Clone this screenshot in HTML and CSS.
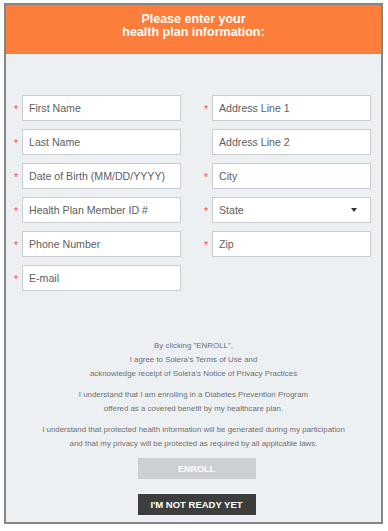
FILE: index.html
```
<!DOCTYPE html>
<html lang="en">

<head>
    <meta charset="UTF-8">
    <meta name="viewport" content="width=device-width, initial-scale=1.0">
    <title>Health Plan Information</title>
    <link rel="stylesheet" href="styles.css">
</head>

<body>
    <div class="frame">
        <div class="header">
            <h1>Please enter your<br>health plan information:</h1>
        </div>
        <div class="form-body">
            <div class="fields">
                <div class="column">
                    <div class="field"><span class="req">*</span><input type="text" placeholder="First Name"></div>
                    <div class="field"><span class="req">*</span><input type="text" placeholder="Last Name"></div>
                    <div class="field"><span class="req">*</span><input type="text" placeholder="Date of Birth (MM/DD/YYYY)"></div>
                    <div class="field"><span class="req">*</span><input type="text" placeholder="Health Plan Member ID #"></div>
                    <div class="field"><span class="req">*</span><input type="text" placeholder="Phone Number"></div>
                    <div class="field"><span class="req">*</span><input type="text" placeholder="E-mail"></div>
                </div>
                <div class="column">
                    <div class="field"><span class="req">*</span><input type="text" placeholder="Address Line 1"></div>
                    <div class="field"><span class="req"></span><input type="text" placeholder="Address Line 2"></div>
                    <div class="field"><span class="req">*</span><input type="text" placeholder="City"></div>
                    <div class="field"><span class="req">*</span>
                        <div class="select-wrap">
                            <select>
                                <option>State</option>
                            </select>
                        </div>
                    </div>
                    <div class="field"><span class="req">*</span><input type="text" placeholder="Zip"></div>
                </div>
            </div>

            <div class="legal">
                <p>By clicking "ENROLL",<br>I agree to Solera's Terms of Use and<br>acknowledge receipt of Solera's Notice of Privacy Practices</p>
                <p>I understand that I am enrolling in a Diabetes Prevention Program<br>offered as a covered benefit by my healthcare plan.</p>
                <p>I understand that protected health information will be generated during my participation<br>and that my privacy will be protected as required by all applicable laws.</p>
            </div>

            <div class="actions">
                <button class="enroll" disabled>ENROLL</button>
                <button class="not-ready">I'M NOT READY YET</button>
            </div>
        </div>
    </div>
</body>

</html>
```

FILE: styles.css
```
* {
    margin: 0;
    padding: 0;
    box-sizing: border-box;
}

body {
    font-family: 'Liberation Sans', Arial, sans-serif;
    background-color: #fff;
    color: #333;
}

.frame {
    width: 379px;
    height: 521px;
    margin: 3px 0 0 4px;
    border: 2px solid #858585;
    background-color: #edf0f3;
    overflow: hidden;
}

.header {
    height: 49px;
    background-color: #fd7e3a;
    padding-top: 8px;
    text-align: center;
}

.header h1 {
    font-size: 12.5px;
    line-height: 13px;
    font-weight: bold;
    color: #fff;
}

.form-body {
    padding-top: 41px;
}

.fields {
    display: grid;
    grid-template-columns: 171px 171px;
    column-gap: 19px;
    padding-left: 4px;
}

.column {
    display: flex;
    flex-direction: column;
    gap: 8px;
}

.field {
    display: flex;
    align-items: center;
    height: 26px;
}

.req {
    width: 12px;
    flex: none;
    padding-left: 4px;
    padding-top: 3px;
    font-size: 10px;
    color: #e0475f;
}

.field input,
.field select {
    width: 159px;
    height: 26px;
    border: 1px solid #c9ccd0;
    background-color: #fff;
    padding: 0 6px;
    font-family: 'Liberation Sans', Arial, sans-serif;
    font-size: 10.6px;
    color: #5e5e5e;
    outline: none;
}

.field input::placeholder {
    color: #5e5e5e;
}

.select-wrap {
    position: relative;
}

.field select {
    appearance: none;
    -webkit-appearance: none;
    border-radius: 0;
}

.select-wrap::after {
    content: '';
    position: absolute;
    right: 14px;
    top: 11px;
    border-left: 3px solid transparent;
    border-right: 3px solid transparent;
    border-top: 4px solid #333;
}

.legal {
    margin-top: 48px;
    text-align: center;
    font-size: 7.9px;
    line-height: 14px;
    color: #6f6f6f;
}

.legal p {
    margin-bottom: 7px;
}

.actions {
    display: flex;
    flex-direction: column;
    align-items: center;
    gap: 15px;
    margin-top: 5px;
    padding-left: 6px;
}

.actions button {
    width: 118px;
    height: 21px;
    border: none;
    font-family: 'Liberation Sans', Arial, sans-serif;
    font-weight: bold;
    color: #fff;
}

.enroll {
    background-color: #ccd0d4;
    font-size: 9px;
}

.not-ready {
    background-color: #3c3e3e;
    font-size: 9.5px;
    cursor: pointer;
}
```
